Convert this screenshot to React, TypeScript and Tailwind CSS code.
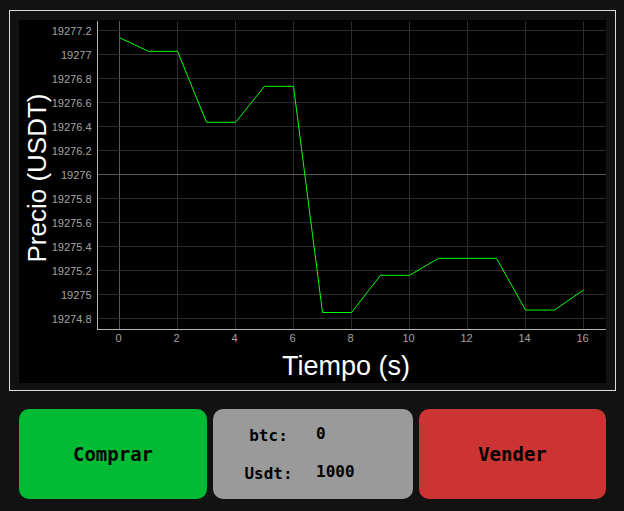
import React from 'react'

const points: [number, number][] = [
  [0, 37.7], [1, 51.3], [2, 51.3], [3, 122.3], [4, 122.3], [5, 86.3], [6, 86.3],
  [7, 312.5], [8, 312.5], [9, 275.3], [10, 275.3], [11, 258.3], [12, 258.3], [13, 258.3],
  [14, 310], [15, 310], [16, 290],
]

const xTicks = [0, 2, 4, 6, 8, 10, 12, 14, 16]
const yTicks = [
  '19277.2', '19277', '19276.8', '19276.6', '19276.4', '19276.2', '19276',
  '19275.8', '19275.6', '19275.4', '19275.2', '19275', '19274.8',
]

const tx = (t: number) => 119.5 + t * 29
const ty = (i: number) => 30.5 + i * 24

function PriceChart() {
  const path = points.map(([t, y], i) => `${i ? 'L' : 'M'}${tx(t)} ${y}`).join(' ')
  return (
    <svg width={587} height={363} viewBox="19 20 587 363" className="block">
      {/* grid */}
      {xTicks.map((t) => (
        <line key={`vx${t}`} x1={tx(t)} y1={21} x2={tx(t)} y2={329} stroke={t === 0 ? '#5a5a5a' : '#2c2c2c'} />
      ))}
      {yTicks.map((v, i) => (
        <line key={`hy${v}`} x1={97} y1={ty(i)} x2={606} y2={ty(i)} stroke={v === '19276' ? '#5a5a5a' : '#2c2c2c'} />
      ))}
      {/* axes */}
      <line x1={97.5} y1={21} x2={97.5} y2={330} stroke="#b4b4b4" />
      <line x1={97} y1={329.5} x2={606} y2={329.5} stroke="#b4b4b4" />
      {/* tick labels */}
      {yTicks.map((v, i) => (
        <text key={`ly${v}`} x={91.5} y={ty(i) + 4} textAnchor="end" fill="#a3a3a3" fontSize={11} fontFamily='"Liberation Sans", Arial, sans-serif'>
          {v}
        </text>
      ))}
      {xTicks.map((t) => (
        <text key={`lx${t}`} x={tx(t) - 1} y={342} textAnchor="middle" fill="#a3a3a3" fontSize={11} fontFamily='"Liberation Sans", Arial, sans-serif'>
          {t}
        </text>
      ))}
      {/* data */}
      <path d={path} fill="none" stroke="#00ff00" strokeWidth={1} />
      {/* titles */}
      <text x={346} y={375} textAnchor="middle" fill="#ffffff" fontSize={27} fontFamily='"Liberation Sans", Arial, sans-serif'>
        Tiempo (s)
      </text>
      <text transform="translate(46 178) rotate(-90)" textAnchor="middle" fill="#ffffff" fontSize={26} fontFamily='"Liberation Sans", Arial, sans-serif'>
        Precio (USDT)
      </text>
    </svg>
  )
}

export default function App() {
  return (
    <div className="w-[624px] h-[511px] bg-[#121212] pt-[10px] pl-[9px]">
      {/* chart frame */}
      <div className="w-[607px] h-[381px] border border-[#dcdcdc] pt-[9px] pl-[9px]">
        <div className="w-[587px] h-[363px] bg-black">
          <PriceChart />
        </div>
      </div>

      {/* controls */}
      <div className="flex gap-[6px] mt-[18px] ml-[10px] h-[90px] font-['DejaVu_Sans_Mono',monospace] font-bold text-black">
        <button className="w-[188px] rounded-[10px] bg-[#00bb33] text-[19px]">Comprar</button>
        <div className="w-[200px] rounded-[10px] bg-[#9a9a9a] text-[16px] grid grid-cols-[111px_1fr] content-center gap-y-[14px] pt-[2px]">
          <span className="text-center">btc:</span>
          <span className="-mt-[2px] -ml-[8px]">0</span>
          <span className="text-center">Usdt:</span>
          <span className="-mt-[2px] -ml-[8px]">1000</span>
        </div>
        <button className="w-[187px] rounded-[10px] bg-[#cc3333] text-[19px]">Vender</button>
      </div>
    </div>
  )
}
